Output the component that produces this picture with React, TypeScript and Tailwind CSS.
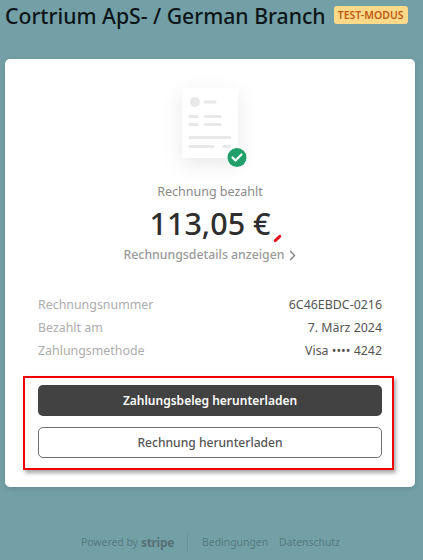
import React from "react";

const font = { fontFamily: '"Noto Sans", "Open Sans", sans-serif' };

function Illustration() {
  return (
    <svg width="140" height="110" viewBox="0 0 140 110" className="block">
      <defs>
        <filter id="s" x="-80%" y="-80%" width="260%" height="260%">
          <feDropShadow dx="0" dy="6" stdDeviation="10" floodColor="#000" floodOpacity="0.09" />
        </filter>
      </defs>
      <rect x="42" y="18" width="56" height="70" rx="2.5" fill="#fff" filter="url(#s)" />
      <circle cx="55" cy="32" r="5" fill="#e8e8e8" />
      <rect x="63.5" y="30.5" width="13" height="3" rx="1.5" fill="#e8e8e8" />
      <rect x="48.5" y="45" width="10" height="3" rx="1.5" fill="#e8e8e8" />
      <rect x="63.5" y="45" width="18" height="3" rx="1.5" fill="#e8e8e8" />
      <rect x="48.5" y="53" width="10" height="3" rx="1.5" fill="#e8e8e8" />
      <rect x="63.5" y="53" width="18" height="3" rx="1.5" fill="#e8e8e8" />
      <rect x="48.5" y="66" width="43" height="3" rx="1.5" fill="#e8e8e8" />
      <rect x="48.5" y="75" width="26" height="3" rx="1.5" fill="#e8e8e8" />
      <rect x="82" y="75" width="9" height="3" rx="1.5" fill="#e8e8e8" />
      <circle cx="97" cy="87.5" r="9.5" fill="#22a06b" />
      <path d="M92.5 87.5l3 3 6-6" fill="none" stroke="#fff" strokeWidth="2.2" strokeLinecap="round" strokeLinejoin="round" />
    </svg>
  );
}

function Row({ label, value }: { label: string; value: string }) {
  return (
    <div className="flex h-[23px] items-center justify-between text-[12.4px]">
      <span className="text-[#adadad]">{label}</span>
      <span className="text-[#555555]">{value}</span>
    </div>
  );
}

export default function App() {
  return (
    <div style={font} className="flex h-[560px] w-[423px] flex-col overflow-hidden bg-[#73a0a6]">
      <header className="flex h-[59px] items-start gap-[8px] pl-[5px] pt-[2px]">
        <h1 className="text-[21.2px] leading-[28px] font-medium text-[#0d1518]">Cortrium ApS- / German Branch</h1>
        <span className="mt-[4px] rounded-[3px] bg-[#ffd98a] px-[4px] text-[10.5px] leading-[18px] font-semibold text-[#bd5b12]">TEST-MODUS</span>
      </header>

      <main className="relative ml-[5px] h-[428px] w-[410px] rounded-[5px] bg-white shadow-[0_2px_6px_rgba(0,0,0,0.12)]">
        <div className="flex flex-col items-center pt-[11px]">
          <Illustration />
          <div className="mt-[3px] text-[12.5px] leading-[18px] text-[#8a8a8a]">Rechnung bezahlt</div>
          <div className="mt-[1px] text-[30.5px] leading-[42px] font-medium text-[#2e2e2e]">113,05 €</div>
          <div className="mt-[1px] flex items-center gap-[5px] text-[12.3px] leading-[20px] font-medium text-[#9a9a9a]">
            <span>Rechnungsdetails anzeigen</span>
            <svg width="7" height="11" viewBox="0 0 7 11">
              <path d="M1.2 1l4.4 4.5L1.2 10" fill="none" stroke="#7a7a7a" strokeWidth="1.2" />
            </svg>
          </div>
        </div>

        <div className="mt-[29px] px-[33px]">
          <Row label="Rechnungsnummer" value="6C46EBDC-0216" />
          <Row label="Bezahlt am" value="7. März 2024" />
          <Row label="Zahlungsmethode" value="Visa •••• 4242" />
        </div>

        <div className="mt-[22px] flex flex-col gap-[11px] px-[33px]">
          <button className="h-[31px] rounded-[5px] bg-[#424242] pt-[1px] text-[12px] font-semibold text-white">Zahlungsbeleg herunterladen</button>
          <button className="h-[31px] rounded-[5px] border border-[#6f6f6f] bg-white pt-[2px] text-[12.1px] font-medium text-[#555555]">Rechnung herunterladen</button>
        </div>

        <div className="absolute left-[18px] top-[317px] h-[94px] w-[371px] border-[2px] border-[#f00000] shadow-[2px_3px_4px_rgba(0,0,0,0.35)]" />
        <svg className="absolute left-[268px] top-[174px]" width="10" height="10" viewBox="0 0 10 10">
          <path d="M2.2 7.6L6.8 3.4" stroke="#e8101c" strokeWidth="3" strokeLinecap="round" />
        </svg>
      </main>

      <footer className="mt-[46px] flex items-center pl-[81px] text-[10.4px] text-[#557a80]">
        <span>Powered by</span>
        <span className="ml-[3px] text-[12px] leading-[16px] font-bold tracking-[-0.3px] text-[#557076]">stripe</span>
        <span className="ml-[13px] h-[20px] w-px bg-[#6a959b]" />
        <span className="ml-[14px]">Bedingungen</span>
        <span className="ml-[11px]">Datenschutz</span>
      </footer>
    </div>
  );
}
